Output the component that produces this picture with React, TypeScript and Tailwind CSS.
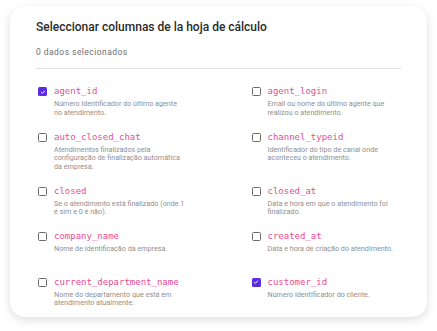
import React from 'react';

type Column = {
  name: string;
  description: string;
  checked?: boolean;
};

const columns: Column[] = [
  { name: 'agent_id', description: 'Número identificador do último agente no atendimento.', checked: true },
  { name: 'agent_login', description: 'Email ou nome do último agente que realizou o atendimento.' },
  { name: 'auto_closed_chat', description: 'Atendimentos finalizados pela configuração de finalização automática da empresa.' },
  { name: 'channel_typeid', description: 'Identificador do tipo de canal onde aconteceu o atendimento.' },
  { name: 'closed', description: 'Se o atendimento está finalizado (onde 1 é sim e 0 é não).' },
  { name: 'closed_at', description: 'Data e hora em que o atendimento foi finalizado.' },
  { name: 'company_name', description: 'Nome de identificação da empresa.' },
  { name: 'created_at', description: 'Data e hora de criação do atendimento.' },
  { name: 'current_department_name', description: 'Nome do departamento que está em atendimento atualmente.' },
  { name: 'customer_id', description: 'Número identificador do cliente.', checked: true },
];

const Checkbox = ({ checked }: { checked?: boolean }) =>
  checked ? (
    <span className="mt-[2px] flex h-[9px] w-[9px] shrink-0 items-center justify-center rounded-[1.5px] bg-[#5b2ee6]">
      <svg viewBox="0 0 10 10" className="h-[6px] w-[6px]">
        <path d="M2 5.2 4.1 7.2 8 2.8" fill="none" stroke="white" strokeWidth="1.6" />
      </svg>
    </span>
  ) : (
    <span className="mt-[2px] h-[9px] w-[9px] shrink-0 rounded-[1.5px] border-[1.5px] border-[#6b6b6b]" />
  );

const ColumnItem = ({ column }: { column: Column }) => (
  <div className="flex gap-[7px] pl-[2px]">
    <Checkbox checked={column.checked} />
    <div className="flex flex-col">
      <span className="font-['DejaVu_Sans_Mono',monospace] text-[9px] leading-[12px] text-[#ec4b94]">
        {column.name}
      </span>
      <p className="mt-[3px] min-h-[17px] w-[132px] text-[7.2px] leading-[8.5px] text-[#8f8f8f]">
        {column.description}
      </p>
    </div>
  </div>
);

const App = () => {
  return (
    <div className="h-[331px] w-[437px] bg-white px-[10px] pt-[6px] font-['Roboto',sans-serif]">
      <div className="rounded-[15px] bg-white px-[26px] pb-[9px] pt-[13px] shadow-[0_3px_10px_rgba(0,0,0,0.13)]">
        <h1 className="text-[12px] font-medium leading-[16px] text-[#2b2b2b]">
          Seleccionar columnas de la hoja de cálculo
        </h1>
        <p className="mt-[11px] text-[8.5px] leading-[12px] tracking-[0.45px] text-[#707070]">
          0 dados selecionados
        </p>
        <div className="mt-[10px] border-t border-[#e3e3e3]" />
        <div className="mt-[16px] grid grid-cols-2 gap-x-[62px] gap-y-[13.5px]">
          {columns.map((column) => (
            <ColumnItem column={column} key={column.name} />
          ))}
        </div>
      </div>
    </div>
  );
};

export default App;
